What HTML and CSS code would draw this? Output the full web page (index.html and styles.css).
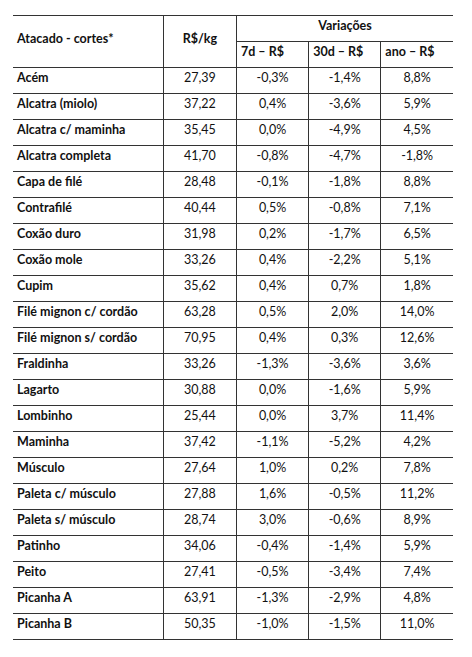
FILE: index.html
```html
<!DOCTYPE html>
<html lang="pt">
<head>
<meta charset="utf-8">
<link rel="stylesheet" href="styles.css">
</head>
<body>
<table class="prices">
  <colgroup>
    <col class="c-name"><col class="c-price"><col class="c-var"><col class="c-var"><col class="c-var">
  </colgroup>
  <thead>
    <tr>
      <th rowspan="2" class="left">Atacado - cortes*</th>
      <th rowspan="2" class="center">R$/kg</th>
      <th colspan="3" class="center">Variações</th>
    </tr>
    <tr>
      <th class="left sub">7d – R$</th>
      <th class="left">30d – R$</th>
      <th class="left">ano – R$</th>
    </tr>
  </thead>
  <tbody>
    <tr><th>Acém</th><td>27,39</td><td>-0,3%</td><td>-1,4%</td><td>8,8%</td></tr>
    <tr><th>Alcatra (miolo)</th><td>37,22</td><td>0,4%</td><td>-3,6%</td><td>5,9%</td></tr>
    <tr><th>Alcatra c/ maminha</th><td>35,45</td><td>0,0%</td><td>-4,9%</td><td>4,5%</td></tr>
    <tr><th>Alcatra completa</th><td>41,70</td><td>-0,8%</td><td>-4,7%</td><td>-1,8%</td></tr>
    <tr><th>Capa de filé</th><td>28,48</td><td>-0,1%</td><td>-1,8%</td><td>8,8%</td></tr>
    <tr><th>Contrafilé</th><td>40,44</td><td>0,5%</td><td>-0,8%</td><td>7,1%</td></tr>
    <tr><th>Coxão duro</th><td>31,98</td><td>0,2%</td><td>-1,7%</td><td>6,5%</td></tr>
    <tr><th>Coxão mole</th><td>33,26</td><td>0,4%</td><td>-2,2%</td><td>5,1%</td></tr>
    <tr><th>Cupim</th><td>35,62</td><td>0,4%</td><td>0,7%</td><td>1,8%</td></tr>
    <tr><th>Filé mignon c/ cordão</th><td>63,28</td><td>0,5%</td><td>2,0%</td><td>14,0%</td></tr>
    <tr><th>Filé mignon s/ cordão</th><td>70,95</td><td>0,4%</td><td>0,3%</td><td>12,6%</td></tr>
    <tr><th>Fraldinha</th><td>33,26</td><td>-1,3%</td><td>-3,6%</td><td>3,6%</td></tr>
    <tr><th>Lagarto</th><td>30,88</td><td>0,0%</td><td>-1,6%</td><td>5,9%</td></tr>
    <tr><th>Lombinho</th><td>25,44</td><td>0,0%</td><td>3,7%</td><td>11,4%</td></tr>
    <tr><th>Maminha</th><td>37,42</td><td>-1,1%</td><td>-5,2%</td><td>4,2%</td></tr>
    <tr><th>Músculo</th><td>27,64</td><td>1,0%</td><td>0,2%</td><td>7,8%</td></tr>
    <tr><th>Paleta c/ músculo</th><td>27,88</td><td>1,6%</td><td>-0,5%</td><td>11,2%</td></tr>
    <tr><th>Paleta s/ músculo</th><td>28,74</td><td>3,0%</td><td>-0,6%</td><td>8,9%</td></tr>
    <tr><th>Patinho</th><td>34,06</td><td>-0,4%</td><td>-1,4%</td><td>5,9%</td></tr>
    <tr><th>Peito</th><td>27,41</td><td>-0,5%</td><td>-3,4%</td><td>7,4%</td></tr>
    <tr><th>Picanha A</th><td>63,91</td><td>-1,3%</td><td>-2,9%</td><td>4,8%</td></tr>
    <tr><th>Picanha B</th><td>50,35</td><td>-1,0%</td><td>-1,5%</td><td>11,0%</td></tr>
  </tbody>
</table>
</body>
</html>
```
FILE: styles.css
```css
html, body {
  margin: 0;
  background: #ffffff;
}
body {
  padding: 15px 0 0 13px;
  font-family: Lato, "Open Sans", sans-serif;
  font-size: 12.5px;
  color: #111111;
}
.prices {
  border-collapse: collapse;
  table-layout: fixed;
  width: 440px;
}
.c-name { width: 150px; }
.c-price { width: 73px; }
.c-var { width: 72px; }
.prices th,
.prices td {
  height: 26px;
  padding: 0 4px 6px 4px;
  border-top: 1px solid #333333;
  border-bottom: 1px solid #333333;
  border-left: 1px solid #333333;
  vertical-align: middle;
  white-space: nowrap;
  box-sizing: border-box;
}
.prices tr > :first-child {
  border-left: none;
}
.prices th {
  font-weight: 700;
  text-align: left;
}
.prices td {
  font-weight: 400;
  text-align: center;
}
.prices th.center { text-align: center; }
.prices th.left { text-align: left; }
.prices thead th.sub {
  border-left: 1px solid #333333;
}
```
